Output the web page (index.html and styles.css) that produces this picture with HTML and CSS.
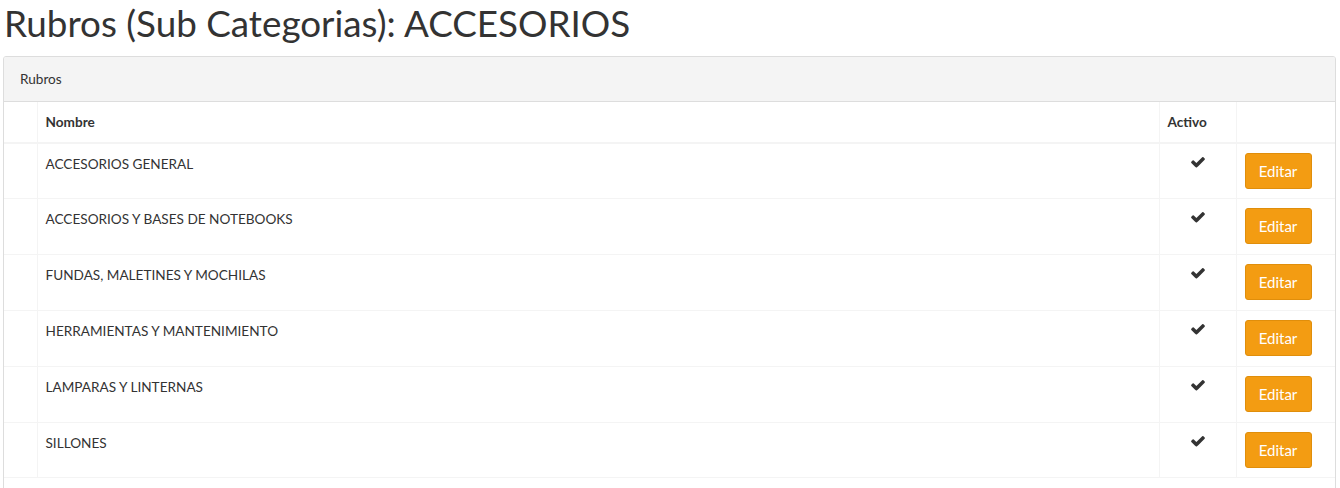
FILE: index.html
```html
<!DOCTYPE html>
<html lang="es">
<head>
<meta charset="utf-8">
<title>Rubros</title>
<link rel="stylesheet" href="styles.css">
</head>
<body>
<div class="page">
  <h1 class="title">Rubros (Sub Categorias): ACCESORIOS</h1>
  <div class="panel">
    <div class="panel-heading">Rubros</div>
    <table class="grid">
      <colgroup>
        <col class="w-idx">
        <col>
        <col class="w-act">
        <col class="w-btn">
      </colgroup>
      <thead>
        <tr>
          <th></th>
          <th>Nombre</th>
          <th>Activo</th>
          <th></th>
        </tr>
      </thead>
      <tbody>
        <tr><td></td><td>ACCESORIOS GENERAL</td><td class="c-act"><svg class="check" viewBox="0 0 1792 1792"><path d="M1671 566q0 40-28 68l-724 724-136 136q-28 28-68 28t-68-28l-136-136-362-362q-28-28-28-68t28-68l136-136q28-28 68-28t68 28l294 295 656-657q28-28 68-28t68 28l136 136q28 28 28 68z"/></svg></td><td class="c-btn"><button class="btn">Editar</button></td></tr>
        <tr><td></td><td>ACCESORIOS Y BASES DE NOTEBOOKS</td><td class="c-act"><svg class="check" viewBox="0 0 1792 1792"><path d="M1671 566q0 40-28 68l-724 724-136 136q-28 28-68 28t-68-28l-136-136-362-362q-28-28-28-68t28-68l136-136q28-28 68-28t68 28l294 295 656-657q28-28 68-28t68 28l136 136q28 28 28 68z"/></svg></td><td class="c-btn"><button class="btn">Editar</button></td></tr>
        <tr><td></td><td>FUNDAS, MALETINES Y MOCHILAS</td><td class="c-act"><svg class="check" viewBox="0 0 1792 1792"><path d="M1671 566q0 40-28 68l-724 724-136 136q-28 28-68 28t-68-28l-136-136-362-362q-28-28-28-68t28-68l136-136q28-28 68-28t68 28l294 295 656-657q28-28 68-28t68 28l136 136q28 28 28 68z"/></svg></td><td class="c-btn"><button class="btn">Editar</button></td></tr>
        <tr><td></td><td>HERRAMIENTAS Y MANTENIMIENTO</td><td class="c-act"><svg class="check" viewBox="0 0 1792 1792"><path d="M1671 566q0 40-28 68l-724 724-136 136q-28 28-68 28t-68-28l-136-136-362-362q-28-28-28-68t28-68l136-136q28-28 68-28t68 28l294 295 656-657q28-28 68-28t68 28l136 136q28 28 28 68z"/></svg></td><td class="c-btn"><button class="btn">Editar</button></td></tr>
        <tr><td></td><td>LAMPARAS Y LINTERNAS</td><td class="c-act"><svg class="check" viewBox="0 0 1792 1792"><path d="M1671 566q0 40-28 68l-724 724-136 136q-28 28-68 28t-68-28l-136-136-362-362q-28-28-28-68t28-68l136-136q28-28 68-28t68 28l294 295 656-657q28-28 68-28t68 28l136 136q28 28 28 68z"/></svg></td><td class="c-btn"><button class="btn">Editar</button></td></tr>
        <tr><td></td><td>SILLONES</td><td class="c-act"><svg class="check" viewBox="0 0 1792 1792"><path d="M1671 566q0 40-28 68l-724 724-136 136q-28 28-68 28t-68-28l-136-136-362-362q-28-28-28-68t28-68l136-136q28-28 68-28t68 28l294 295 656-657q28-28 68-28t68 28l136 136q28 28 28 68z"/></svg></td><td class="c-btn"><button class="btn">Editar</button></td></tr>
      </tbody>
    </table>
    <div class="panel-foot"></div>
  </div>
</div>
</body>
</html>
```

FILE: styles.css
```css
html, body {
  margin: 0;
  padding: 0;
  background: #fff;
}
body {
  font-family: "Lato", "Liberation Sans", sans-serif;
  font-size: 13.6px;
  line-height: 20px;
  color: #333;
}
.page {
  padding: 0 4px 0 3px;
}
.title {
  margin: 0 0 10px 0;
  padding-left: 1px;
  font-size: 36.8px;
  font-weight: 400;
  line-height: 46px;
  color: #333;
}
.panel {
  border: 1px solid #ddd;
  border-radius: 3px 3px 0 0;
  background: #fff;
  overflow: hidden;
}
.panel-heading {
  background: #f4f4f4;
  border-bottom: 1px solid #ddd;
  height: 45px;
  box-sizing: border-box;
  padding: 12px 16px;
  line-height: 20px;
  color: #333;
}
.grid {
  width: 100%;
  border-collapse: collapse;
  table-layout: fixed;
}
.w-idx { width: 33px; }
.w-act { width: 77px; }
.w-btn { width: 99px; }
.grid th, .grid td {
  border: 1px solid #f4f4f4;
  padding: 8px;
  vertical-align: top;
  text-align: left;
}
.grid tr > :first-child { border-left: 0; }
.grid tr > :last-child { border-right: 0; }
.grid thead tr:first-child th { border-top: 0; }
.grid th {
  font-weight: 700;
  border-bottom-width: 2px;
  height: 41px;
  box-sizing: border-box;
  padding-top: 10px;
}
.grid td {
  height: 55.83px;
  box-sizing: border-box;
  padding-top: 10px;
}
.grid td.c-act { text-align: center; padding-top: 11px; }
.grid td.c-btn { padding-top: 9px; }
.panel-foot {
  height: 20px;
}
.check {
  width: 16px;
  height: 16px;
  fill: #333;
  display: inline-block;
  vertical-align: top;
  margin-top: -1px;
}
.btn {
  display: block;
  width: 67px;
  height: 36px;
  padding: 0;
  background: #f39c12;
  border: 1px solid #e08e0b;
  border-radius: 3px;
  color: #fff;
  font-family: "Lato", "Liberation Sans", sans-serif;
  font-size: 15px;
  line-height: 20px;
  cursor: pointer;
}
```
